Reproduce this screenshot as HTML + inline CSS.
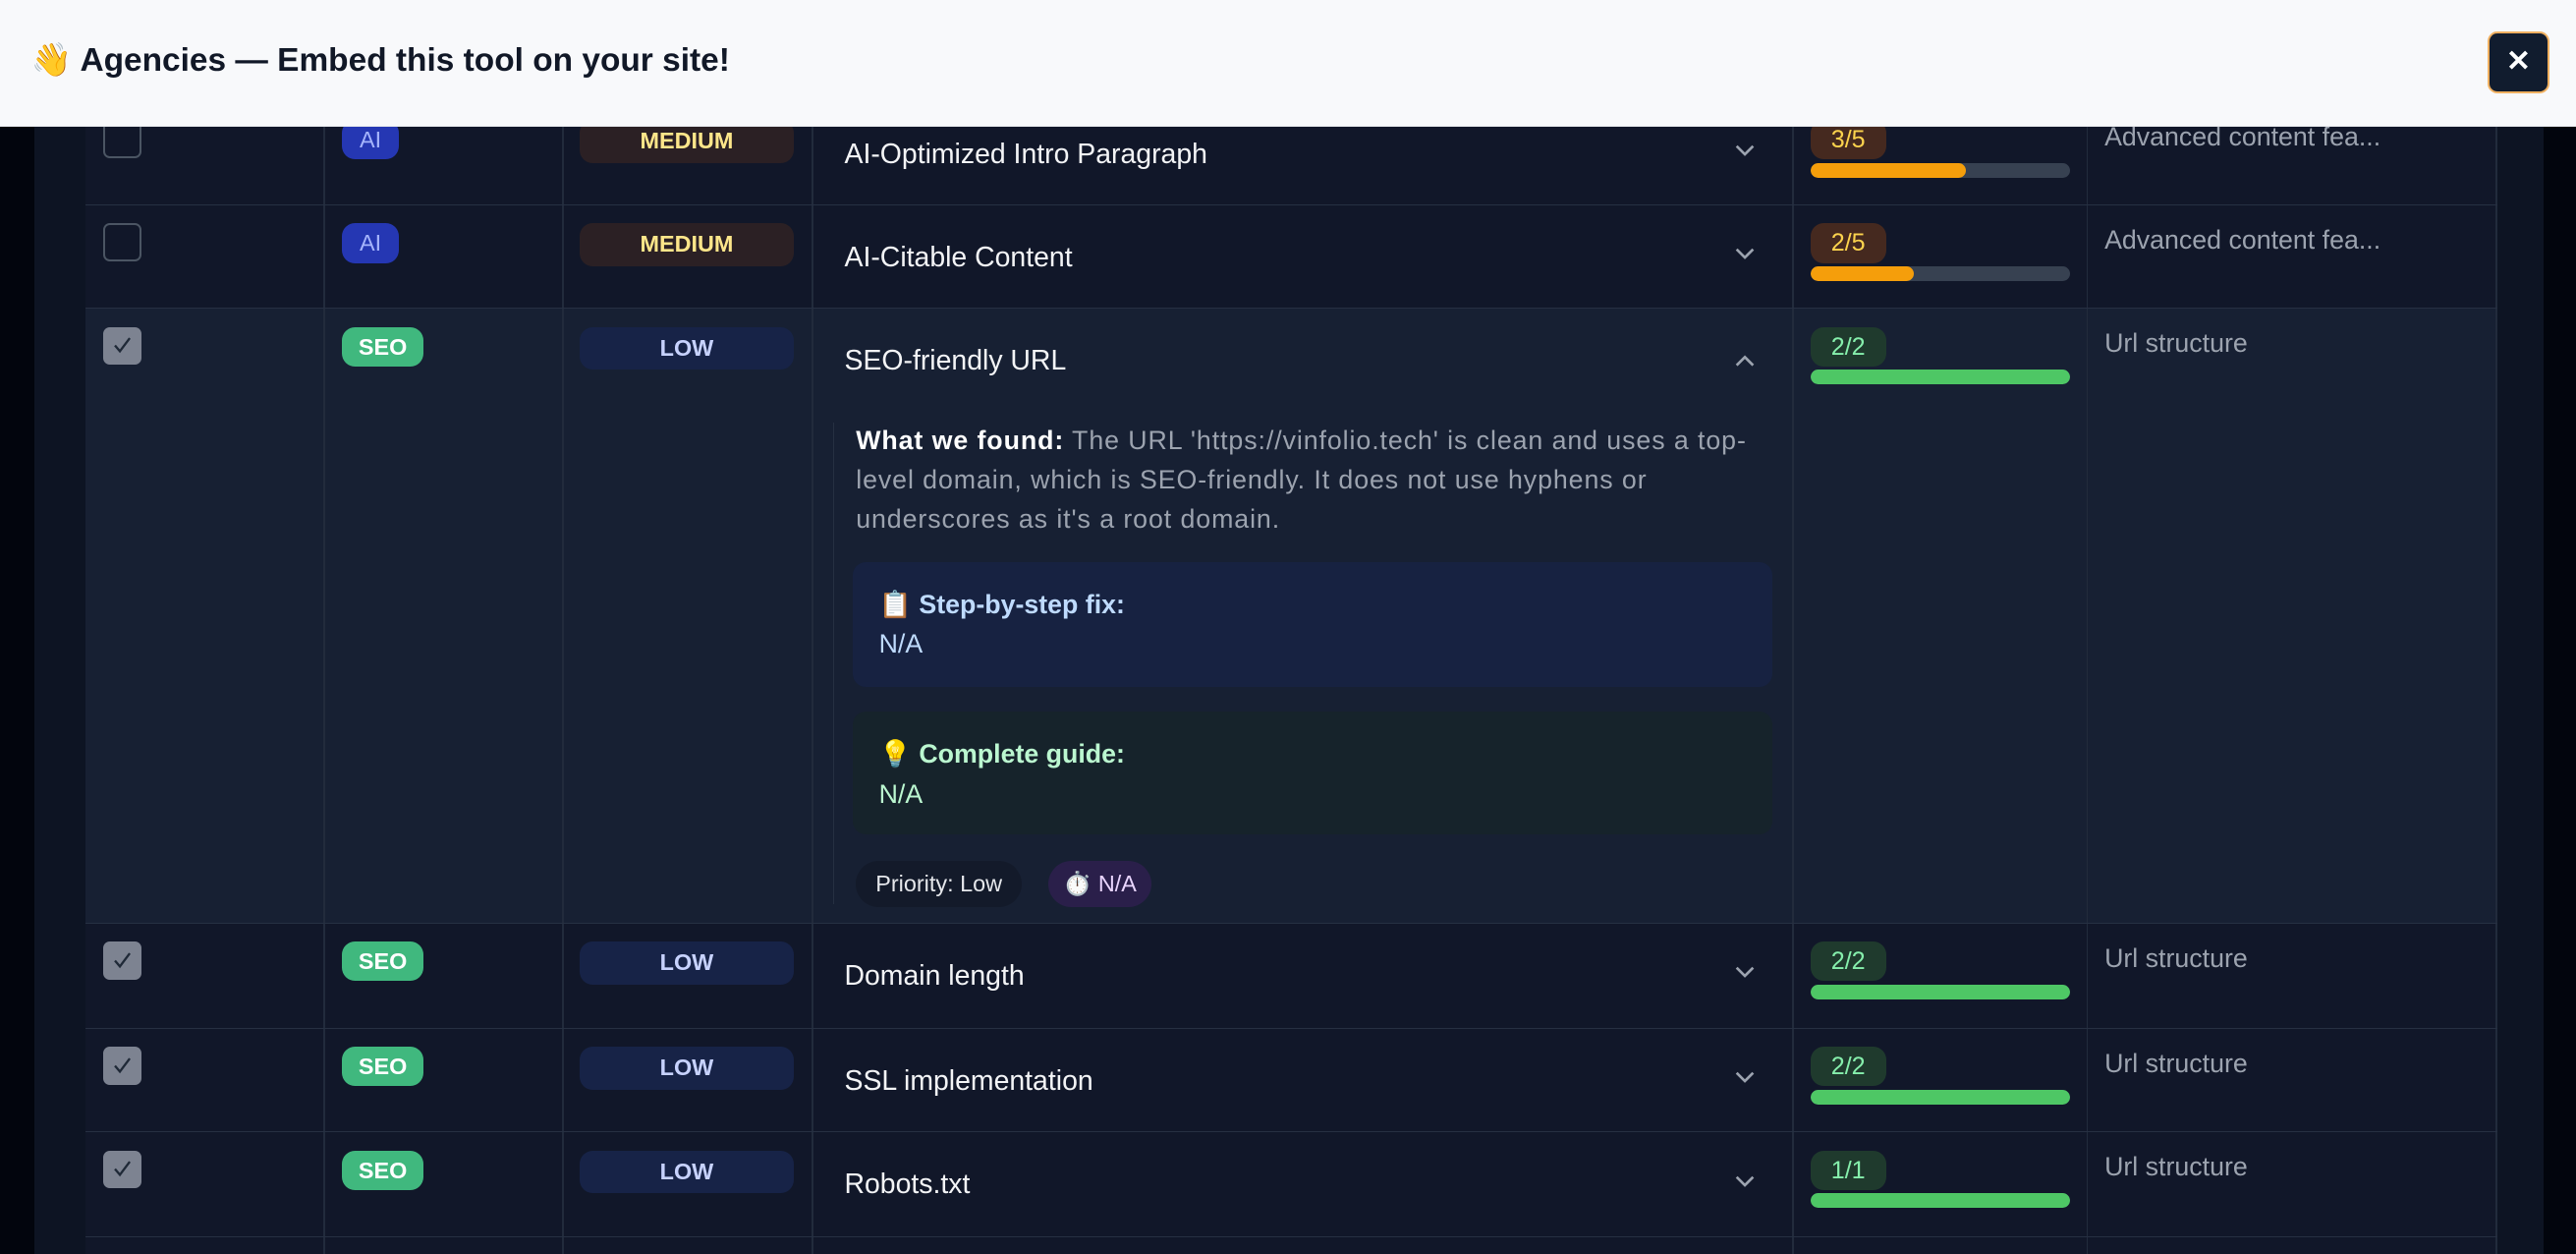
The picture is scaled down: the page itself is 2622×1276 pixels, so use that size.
<!DOCTYPE html>
<html><head><meta charset="utf-8"><style>
*{margin:0;padding:0;box-sizing:border-box}
html,body{width:2622px;height:1276px;overflow:hidden;background:#02050d}
#w{position:absolute;left:0;top:0;width:1568px;height:763px;zoom:1.6722;font-family:"Liberation Sans","Noto Sans CJK SC",sans-serif;overflow:hidden;background:#02050d}
.abs{position:absolute}
.panel{left:21px;top:0;width:1527px;height:763px;background:#0d1423}
.row{position:absolute;left:52px;width:1468px;background:#111729;border-bottom:1px solid #263042}
.row.exp{background:#172033}
.vl{position:absolute;top:0;bottom:0;width:1px;background:#222b3c}
.cb{position:absolute;left:11px;top:11px;width:23px;height:23px;border:1.5px solid #4b5563;border-radius:4px}
.cb.on{background:#7d8391;border:none}
.cb.on svg{position:absolute;left:4px;top:4px}
.tag{position:absolute;left:156px;top:11px;height:24px;border-radius:8px;font-size:14px;font-weight:bold;line-height:24px;text-align:center}
.ai{width:35px;background:#2537b3;color:#a5b4fc;font-weight:normal}
.seo{width:50px;background:#40b87e;color:#fff}
.pri{position:absolute;left:301px;top:11px;width:130px;height:26px;border-radius:8px;font-size:14px;font-weight:bold;line-height:26px;text-align:center}
.med{background:#2b2024;color:#fde68a}
.low{background:#172347;color:#c7d2fe}
.tt{position:absolute;left:462px;top:21px;font-size:17px;color:#f3f4f6;line-height:22px}
.chev{position:absolute;left:1004px;top:26px}
.sb{position:absolute;left:1050px;top:11px;width:46px;height:24px;border-radius:8px;font-size:15px;line-height:24px;text-align:center}
.so{background:#45291f;color:#fcd34d}
.sg{background:#1f3a2d;color:#86efac}
.bar{position:absolute;left:1050px;top:37px;width:158px;height:9px;border-radius:5px;background:#374151;overflow:hidden}
.bar i{display:block;height:100%;border-radius:5px}
.cat{position:absolute;left:1229px;top:12px;font-size:16px;color:#9ca3af}
</style></head><body><div id="w">
<div class="abs panel"></div>
<div class="abs" style="left:52px;top:60px;width:1px;height:703px;background:#263042"></div>

<div class="row" style="top:62px;height:63px">
<div class="vl" style="left:145px"></div><div class="vl" style="left:290px"></div><div class="vl" style="left:442px"></div><div class="vl" style="left:1039px"></div><div class="vl" style="left:1218px"></div><div class="vl" style="left:1467px"></div>
<div class="cb"></div><div class="tag ai">AI</div><div class="pri med">MEDIUM</div>
<div class="tt">AI-Optimized Intro Paragraph</div>
<svg class="chev" width="12" height="8" viewBox="0 0 12 8"><path d="M1 1l5 5 5-5" fill="none" stroke="#9ca3af" stroke-width="1.6"/></svg>
<div class="sb so">3/5</div><div class="bar"><i style="width:60%;background:#f59e0b"></i></div>
<div class="cat">Advanced content fea...</div>
</div>
<div class="row" style="top:125px;height:63px">
<div class="vl" style="left:145px"></div><div class="vl" style="left:290px"></div><div class="vl" style="left:442px"></div><div class="vl" style="left:1039px"></div><div class="vl" style="left:1218px"></div><div class="vl" style="left:1467px"></div>
<div class="cb"></div><div class="tag ai">AI</div><div class="pri med">MEDIUM</div>
<div class="tt">AI-Citable Content</div>
<svg class="chev" width="12" height="8" viewBox="0 0 12 8"><path d="M1 1l5 5 5-5" fill="none" stroke="#9ca3af" stroke-width="1.6"/></svg>
<div class="sb so">2/5</div><div class="bar"><i style="width:40%;background:#f59e0b"></i></div>
<div class="cat">Advanced content fea...</div>
</div>
<div class="row exp" style="top:188px;height:374px">
<div class="vl" style="left:145px"></div><div class="vl" style="left:290px"></div><div class="vl" style="left:442px"></div><div class="vl" style="left:1039px"></div><div class="vl" style="left:1218px"></div><div class="vl" style="left:1467px"></div>
<div class="cb on"><svg width="15" height="15" viewBox="0 0 15 15"><path d="M3 7.5l3 3.5 6-8" fill="none" stroke="#1f2937" stroke-width="1.4"/></svg></div>
<div class="tag seo">SEO</div><div class="pri low">LOW</div>
<div class="tt">SEO-friendly URL</div>
<svg class="chev" width="12" height="8" viewBox="0 0 12 8" style="top:27px"><path d="M1 7l5-5 5 5" fill="none" stroke="#9ca3af" stroke-width="1.6"/></svg>
<div class="sb sg">2/2</div><div class="bar"><i style="width:100%;background:#4ec765"></i></div>
<div class="cat">Url structure</div>
<div class="abs" style="left:455px;top:69px;width:1px;height:293px;background:#263042"></div>
<div class="abs" style="left:469px;top:68px;width:552px;font-size:16px;line-height:24px;color:#9ca3af;letter-spacing:0.55px"><b style="color:#fff">What we found:</b> The URL 'https://vinfolio.tech' is clean and uses a top-level domain, which is SEO-friendly. It does not use hyphens or underscores as it's a root domain.</div>
<div class="abs" style="left:467px;top:154px;width:560px;height:76px;border-radius:8px;background:#172241;padding:14px 16px;font-size:16px;line-height:24px;color:#bfdbfe"><b>📋 Step-by-step fix:</b><br>N/A</div>
<div class="abs" style="left:467px;top:245px;width:560px;height:75px;border-radius:8px;background:#16232b;padding:14px 16px;font-size:16px;line-height:24px;color:#bbf7d0"><b>💡 Complete guide:</b><br>N/A</div>
<div class="abs" style="left:469px;top:336px;width:101px;height:28px;border-radius:14px;background:#131a2a;color:#e5e7eb;font-size:14px;line-height:28px;text-align:center">Priority: Low</div>
<div class="abs" style="left:586px;top:336px;width:63px;height:28px;border-radius:14px;background:#2a1f4a;color:#e9d5ff;font-size:14px;line-height:28px;text-align:center">⏱️ N/A</div>
</div>
<div class="row" style="top:562px;height:64px">
<div class="vl" style="left:145px"></div><div class="vl" style="left:290px"></div><div class="vl" style="left:442px"></div><div class="vl" style="left:1039px"></div><div class="vl" style="left:1218px"></div><div class="vl" style="left:1467px"></div>
<div class="cb on"><svg width="15" height="15" viewBox="0 0 15 15"><path d="M3 7.5l3 3.5 6-8" fill="none" stroke="#1f2937" stroke-width="1.4"/></svg></div>
<div class="tag seo">SEO</div><div class="pri low">LOW</div>
<div class="tt">Domain length</div>
<svg class="chev" width="12" height="8" viewBox="0 0 12 8"><path d="M1 1l5 5 5-5" fill="none" stroke="#9ca3af" stroke-width="1.6"/></svg>
<div class="sb sg">2/2</div><div class="bar"><i style="width:100%;background:#4ec765"></i></div>
<div class="cat">Url structure</div>
</div>
<div class="row" style="top:626px;height:63px">
<div class="vl" style="left:145px"></div><div class="vl" style="left:290px"></div><div class="vl" style="left:442px"></div><div class="vl" style="left:1039px"></div><div class="vl" style="left:1218px"></div><div class="vl" style="left:1467px"></div>
<div class="cb on"><svg width="15" height="15" viewBox="0 0 15 15"><path d="M3 7.5l3 3.5 6-8" fill="none" stroke="#1f2937" stroke-width="1.4"/></svg></div>
<div class="tag seo">SEO</div><div class="pri low">LOW</div>
<div class="tt">SSL implementation</div>
<svg class="chev" width="12" height="8" viewBox="0 0 12 8"><path d="M1 1l5 5 5-5" fill="none" stroke="#9ca3af" stroke-width="1.6"/></svg>
<div class="sb sg">2/2</div><div class="bar"><i style="width:100%;background:#4ec765"></i></div>
<div class="cat">Url structure</div>
</div>
<div class="row" style="top:689px;height:64px">
<div class="vl" style="left:145px"></div><div class="vl" style="left:290px"></div><div class="vl" style="left:442px"></div><div class="vl" style="left:1039px"></div><div class="vl" style="left:1218px"></div><div class="vl" style="left:1467px"></div>
<div class="cb on"><svg width="15" height="15" viewBox="0 0 15 15"><path d="M3 7.5l3 3.5 6-8" fill="none" stroke="#1f2937" stroke-width="1.4"/></svg></div>
<div class="tag seo">SEO</div><div class="pri low">LOW</div>
<div class="tt">Robots.txt</div>
<svg class="chev" width="12" height="8" viewBox="0 0 12 8"><path d="M1 1l5 5 5-5" fill="none" stroke="#9ca3af" stroke-width="1.6"/></svg>
<div class="sb sg">1/1</div><div class="bar"><i style="width:100%;background:#4ec765"></i></div>
<div class="cat">Url structure</div>
</div>
<div class="row" style="top:753px;height:40px">
<div class="vl" style="left:145px"></div><div class="vl" style="left:290px"></div><div class="vl" style="left:442px"></div><div class="vl" style="left:1039px"></div><div class="vl" style="left:1218px"></div><div class="vl" style="left:1467px"></div>
</div>

<div class="abs" style="left:0;top:0;width:1568px;height:77px;background:#f8f9fb;border-bottom:1px solid #e5e7eb"></div>
<div class="abs" style="left:19px;top:25px;font-size:20px;font-weight:bold;color:#111827;line-height:24px">👋 Agencies — Embed this tool on your site!</div>
<div class="abs" style="left:1514px;top:19px;width:38px;height:38px;background:#111c2e;border:1.5px solid #f0b060;border-radius:6px;color:#fff;font-size:18px;font-weight:bold;line-height:35px;text-align:center">✕</div>
</div></body></html>
